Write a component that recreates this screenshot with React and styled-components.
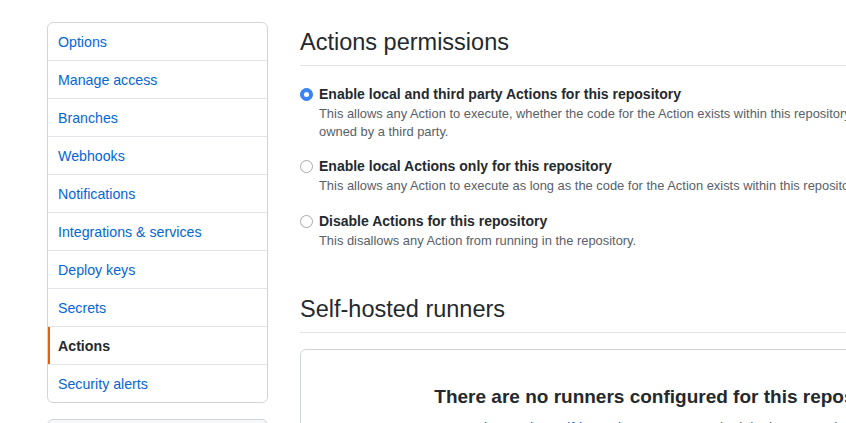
import React from "react";
import styled, { createGlobalStyle } from "styled-components";

const Global = createGlobalStyle`
  html, body { margin: 0; padding: 0; background: #fff; overflow: hidden; }
  body { font-family: "Liberation Sans", Arial, sans-serif; color: #24292e; font-size: 14px; line-height: 1.5; }
`;

const Page = styled.div`
  display: flex;
  gap: 32px;
  padding: 22px 0 0 47px;
  width: 1100px;
`;

const Side = styled.div`
  width: 221px;
  flex: none;
  display: flex;
  flex-direction: column;
  gap: 16px;
`;

const Menu = styled.nav`
  border: 1px solid #d1d5da;
  border-radius: 6px;
  overflow: hidden;
`;

const MenuItem = styled.a`
  display: block;
  padding: 9px 10px 7px;
  line-height: 21px;
  font-size: 14.2px;
  text-decoration: none;
  color: ${(p) => (p.$active ? "#24292e" : "#0366d6")};
  font-weight: ${(p) => (p.$active ? 600 : 400)};
  border-bottom: 1px solid #e1e4e8;
  box-shadow: ${(p) => (p.$active ? "inset 2px 0 0 #e36209" : "none")};
  &:last-child { border-bottom: 0; }
`;

const SecondBox = styled.div`
  height: 40px;
  border: 1px solid #d1d5da;
  border-radius: 6px;
  background: #f6f8fa;
`;

const Main = styled.main`
  width: 730px;
  flex: none;
  padding-top: 5px;
`;

const Subhead = styled.div`
  padding-bottom: 8px;
  margin-bottom: 16px;
  border-bottom: 1px solid #e1e4e8;
  margin-top: ${(p) => p.$top || 0}px;
`;

const Heading = styled.h2`
  margin: 0;
  font-size: 23.5px;
  font-weight: 400;
  line-height: 30px;
  color: #24292e;
`;

const Options = styled.div`
  display: flex;
  flex-direction: column;
  gap: 16px;
  padding-top: 2px;
`;

const Option = styled.label`
  display: grid;
  grid-template-columns: 13px 1fr;
  column-gap: 6px;
`;

const Radio = styled.span`
  width: 13px;
  height: 13px;
  margin-top: 4px;
  box-sizing: border-box;
  border-radius: 50%;
  border: 1px solid ${(p) => (p.$checked ? "#2f7cf6" : "#a9a9a9")};
  background: ${(p) => (p.$checked ? "#3b86f7" : "#fff")};
  display: flex;
  align-items: center;
  justify-content: center;
  &::after {
    content: "";
    width: 5px;
    height: 5px;
    border-radius: 50%;
    background: #fff;
    display: ${(p) => (p.$checked ? "block" : "none")};
  }
`;

const OptionTitle = styled.div`
  font-weight: 600;
  font-size: 14px;
  line-height: 21px;
  color: #24292e;
`;

const Note = styled.p`
  grid-column: 2;
  margin: 0;
  font-size: 12.9px;
  line-height: 17.5px;
  color: #586069;
  max-width: 578px;
`;

const Blank = styled.div`
  border: 1px solid #d1d5da;
  border-radius: 6px;
  padding: 32px;
  text-align: center;
`;

const BlankTitle = styled.h3`
  margin: 0;
  font-size: 19px;
  line-height: 30px;
  font-weight: 600;
  color: #24292e;
`;

const BlankText = styled.p`
  margin: 6px 0 0;
  font-size: 14px;
  line-height: 21px;
  color: #586069;
`;

const Link = styled.a`
  color: #0366d6;
  text-decoration: none;
`;

const items = [
  "Options",
  "Manage access",
  "Branches",
  "Webhooks",
  "Notifications",
  "Integrations & services",
  "Deploy keys",
  "Secrets",
  "Actions",
  "Security alerts",
];

const opts = [
  {
    title: "Enable local and third party Actions for this repository",
    note: "This allows any Action to execute, whether the code for the Action exists within this repository or is owned by a third party.",
    checked: true,
  },
  {
    title: "Enable local Actions only for this repository",
    note: "This allows any Action to execute as long as the code for the Action exists within this repository.",
  },
  {
    title: "Disable Actions for this repository",
    note: "This disallows any Action from running in the repository.",
  },
];

export default function App() {
  return (
    <>
      <Global />
      <Page>
        <Side>
          <Menu>
            {items.map((it) => (
              <MenuItem key={it} href="#" $active={it === "Actions"}>
                {it}
              </MenuItem>
            ))}
          </Menu>
          <SecondBox />
        </Side>
        <Main>
          <Subhead>
            <Heading>Actions permissions</Heading>
          </Subhead>
          <Options>
            {opts.map((o) => (
              <Option key={o.title}>
                <Radio $checked={o.checked} />
                <OptionTitle>{o.title}</OptionTitle>
                <Note>{o.note}</Note>
              </Option>
            ))}
          </Options>
          <Subhead $top={45}>
            <Heading>Self-hosted runners</Heading>
          </Subhead>
          <Blank>
            <BlankTitle>There are no runners configured for this repository</BlankTitle>
            <BlankText>
              <Link href="#">Learn more about using self-hosted runners</Link> to run the jobs in your Actions workflows.
            </BlankText>
          </Blank>
        </Main>
      </Page>
    </>
  );
}
